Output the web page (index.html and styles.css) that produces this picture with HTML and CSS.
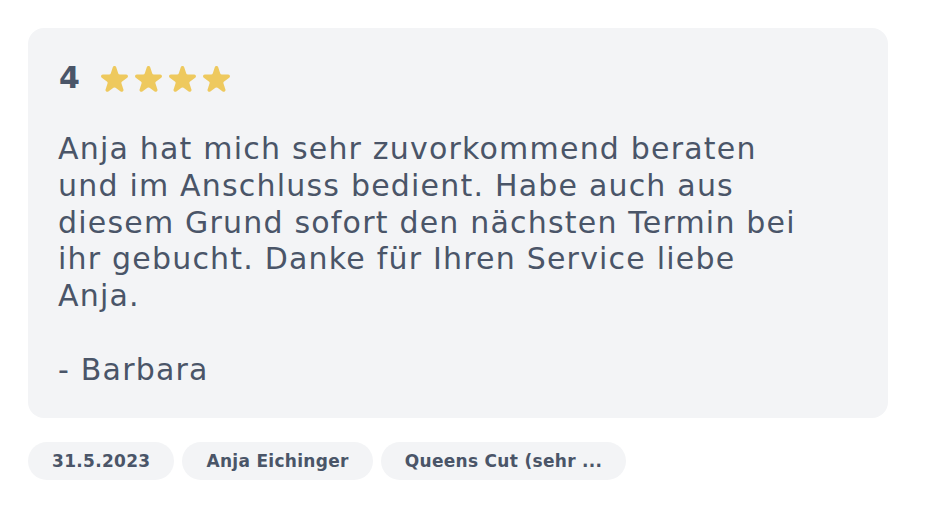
FILE: index.html
```html
<!DOCTYPE html>
<html lang="de">
<head>
<meta charset="utf-8">
<title>Bewertung</title>
<link rel="stylesheet" href="styles.css">
</head>
<body>
<article class="review">
  <div class="card">
    <div class="rating">
      <span class="score">4</span>
      <div class="stars">
        <svg class="star" viewBox="2.55 2.2 14.9 14.9" width="27" height="27"><path d="M9.049 2.927c.3-.921 1.603-.921 1.902 0l1.07 3.292a1 1 0 00.95.69h3.462c.969 0 1.371 1.24.588 1.81l-2.8 2.034a1 1 0 00-.364 1.118l1.07 3.292c.3.921-.755 1.688-1.54 1.118l-2.8-2.034a1 1 0 00-1.175 0l-2.8 2.034c-.784.57-1.838-.197-1.539-1.118l1.07-3.292a1 1 0 00-.364-1.118L2.98 8.72c-.783-.57-.38-1.81.588-1.81h3.461a1 1 0 00.951-.69l1.07-3.292z"/></svg>
        <svg class="star" viewBox="2.55 2.2 14.9 14.9" width="27" height="27"><path d="M9.049 2.927c.3-.921 1.603-.921 1.902 0l1.07 3.292a1 1 0 00.95.69h3.462c.969 0 1.371 1.24.588 1.81l-2.8 2.034a1 1 0 00-.364 1.118l1.07 3.292c.3.921-.755 1.688-1.54 1.118l-2.8-2.034a1 1 0 00-1.175 0l-2.8 2.034c-.784.57-1.838-.197-1.539-1.118l1.07-3.292a1 1 0 00-.364-1.118L2.98 8.72c-.783-.57-.38-1.81.588-1.81h3.461a1 1 0 00.951-.69l1.07-3.292z"/></svg>
        <svg class="star" viewBox="2.55 2.2 14.9 14.9" width="27" height="27"><path d="M9.049 2.927c.3-.921 1.603-.921 1.902 0l1.07 3.292a1 1 0 00.95.69h3.462c.969 0 1.371 1.24.588 1.81l-2.8 2.034a1 1 0 00-.364 1.118l1.07 3.292c.3.921-.755 1.688-1.54 1.118l-2.8-2.034a1 1 0 00-1.175 0l-2.8 2.034c-.784.57-1.838-.197-1.539-1.118l1.07-3.292a1 1 0 00-.364-1.118L2.98 8.72c-.783-.57-.38-1.81.588-1.81h3.461a1 1 0 00.951-.69l1.07-3.292z"/></svg>
        <svg class="star" viewBox="2.55 2.2 14.9 14.9" width="27" height="27"><path d="M9.049 2.927c.3-.921 1.603-.921 1.902 0l1.07 3.292a1 1 0 00.95.69h3.462c.969 0 1.371 1.24.588 1.81l-2.8 2.034a1 1 0 00-.364 1.118l1.07 3.292c.3.921-.755 1.688-1.54 1.118l-2.8-2.034a1 1 0 00-1.175 0l-2.8 2.034c-.784.57-1.838-.197-1.539-1.118l1.07-3.292a1 1 0 00-.364-1.118L2.98 8.72c-.783-.57-.38-1.81.588-1.81h3.461a1 1 0 00.951-.69l1.07-3.292z"/></svg>
      </div>
    </div>
    <p class="text">Anja hat mich sehr zuvorkommend beraten<br>und im Anschluss bedient. Habe auch aus<br>diesem Grund sofort den nächsten Termin bei<br>ihr gebucht. Danke für Ihren Service liebe<br>Anja.<br><br>- Barbara</p>
  </div>
  <ul class="tags">
    <li class="tag tag-date">31.5.2023</li>
    <li class="tag">Anja Eichinger</li>
    <li class="tag">Queens Cut (sehr ...</li>
  </ul>
</article>
</body>
</html>
```
FILE: styles.css
```css
* { box-sizing: border-box; }
html, body { margin: 0; background: #ffffff; }
body {
  padding: 28px;
  font-family: "DejaVu Sans", "Noto Sans", sans-serif;
  color: #4a5568;
}
.review { width: 860px; }
.card {
  background: #f3f4f6;
  border-radius: 16px;
  padding: 32px 30px 29px 30px;
}
.rating {
  display: flex;
  align-items: center;
  gap: 21px;
  height: 36px;
}
.score {
  font-size: 30px;
  font-weight: 700;
  line-height: 36px;
  margin-left: 1px;
}
.stars {
  display: flex;
  gap: 7px;
  margin-top: 3px;
}
.star { display: block; fill: #eec95e; }
.text {
  margin: 35px 0 0 0;
  font-size: 30px;
  line-height: 36.8px;
  letter-spacing: 1.2px;
}
.tags {
  list-style: none;
  margin: 24px 0 0 0;
  padding: 0;
  display: flex;
  gap: 8px;
}
.tag {
  background: #f3f4f6;
  border-radius: 999px;
  padding: 5px 24px;
  font-family: "DejaVu Sans", sans-serif;
  font-size: 17px;
  font-weight: 700;
  line-height: 28px;
  letter-spacing: 0.3px;
  white-space: nowrap;
}
.tag-date { padding: 5px 24px; }
```
